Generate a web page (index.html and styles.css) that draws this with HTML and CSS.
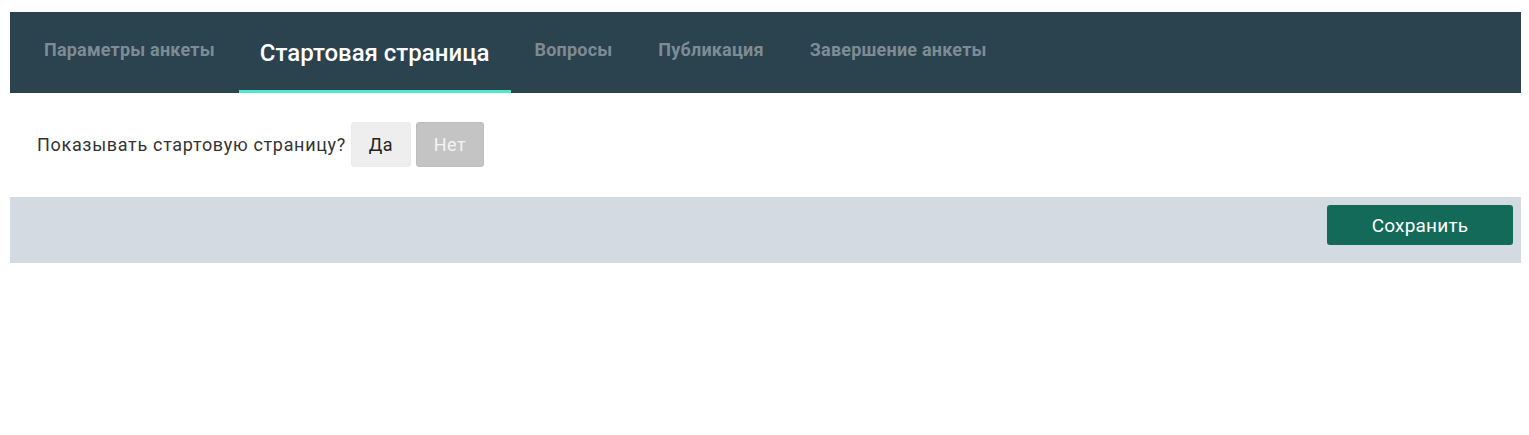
FILE: index.html
```html
<!DOCTYPE html>
<html lang="ru">
<head>
<meta charset="utf-8">
<link rel="stylesheet" href="styles.css">
</head>
<body>
<div class="page">
  <nav class="tabs">
    <a class="tab">Параметры анкеты</a>
    <a class="tab active">Стартовая страница</a>
    <a class="tab">Вопросы</a>
    <a class="tab">Публикация</a>
    <a class="tab">Завершение анкеты</a>
  </nav>
  <div class="content">
    <span class="label">Показывать стартовую страницу?</span>
    <button class="opt">Да</button>
    <button class="opt selected">Нет</button>
  </div>
  <div class="footer">
    <button class="save">Сохранить</button>
  </div>
</div>
</body>
</html>
```
FILE: styles.css
```css
html, body {
  margin: 0;
  padding: 0;
  background: #fff;
  font-family: Roboto, "Liberation Sans", sans-serif;
}
.page {
  margin: 12px 8px 0 10px;
}
.tabs {
  display: flex;
  align-items: stretch;
  height: 81px;
  background: #2b424f;
  padding-left: 12px;
  gap: 2px;
}
.tab {
  display: flex;
  align-items: center;
  padding: 0 22px 3px;
  font-size: 18px;
  font-weight: 700;
  color: #7d8c94;
  letter-spacing: 0.2px;
  border-bottom: 3px solid transparent;
  cursor: pointer;
}
.tab.active {
  padding: 3px 21px 0;
  font-size: 24px;
  font-weight: 500;
  color: #fff;
  letter-spacing: 0;
  border-bottom-color: #4ce9cb;
}
.content {
  display: flex;
  align-items: center;
  padding: 29px 27px 30px;
  gap: 5px;
}
.label {
  font-size: 18px;
  color: #333;
  letter-spacing: 0.68px;
}
.opt {
  height: 45px;
  width: 60px;
  padding: 0;
  border: 1px solid #ececec;
  border-radius: 3px;
  background: #eeeeee;
  font-family: inherit;
  font-size: 18px;
  letter-spacing: 0.5px;
  color: #222;
}
.opt.selected {
  width: 68px;
  background: #c4c4c4;
  border-color: #bdbdbd;
  color: #f4f4f4;
}
.footer {
  display: flex;
  justify-content: flex-end;
  background: #d3dae1;
  height: 66px;
  padding: 8px 8px 0;
  box-sizing: border-box;
}
.save {
  width: 186px;
  height: 40px;
  background: #146a58;
  border: none;
  border-radius: 3px;
  color: #fff;
  font-family: inherit;
  font-size: 19px;
  letter-spacing: 0.2px;
}
```
